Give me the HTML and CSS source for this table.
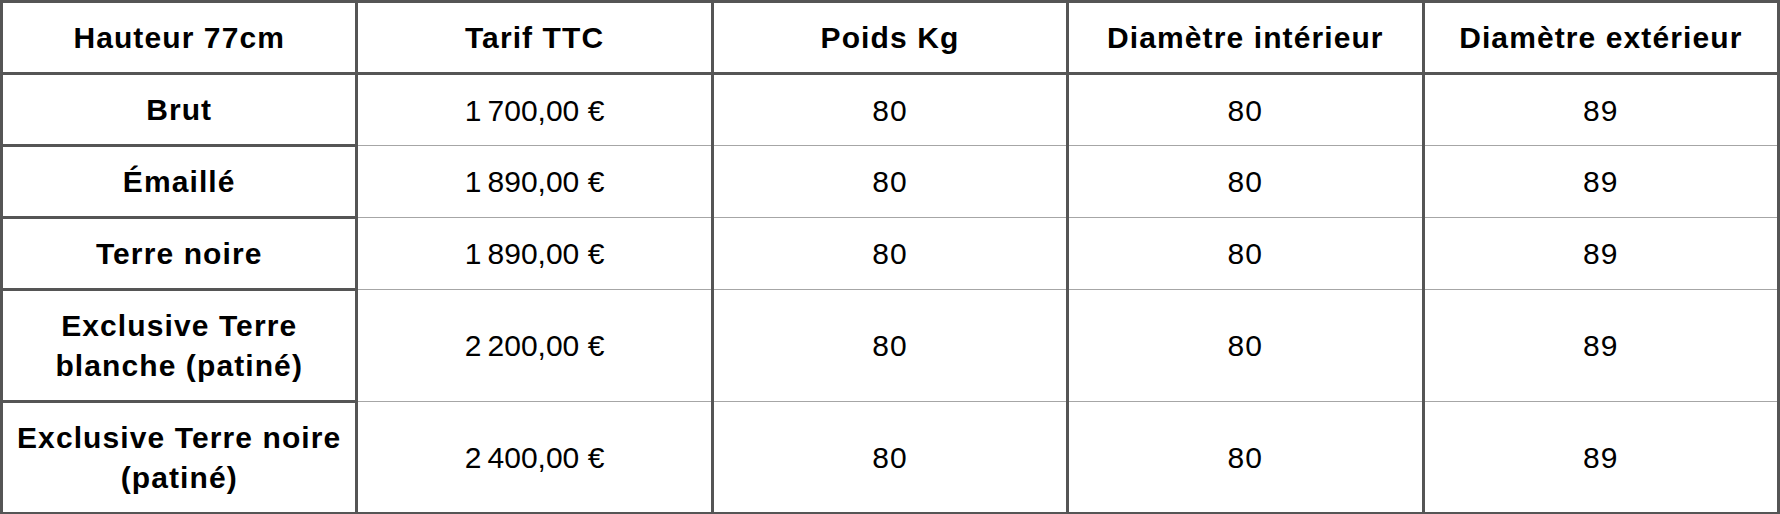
FILE: index.html
```html
<!DOCTYPE html>
<html lang="fr">
<head>
<meta charset="utf-8">
<title>Tarifs</title>
<link rel="stylesheet" href="styles.css">
</head>
<body>
<table class="price-table">
  <colgroup>
    <col class="col"><col class="col"><col class="col"><col class="col"><col class="col">
  </colgroup>
  <thead>
    <tr>
      <th class="head">Hauteur 77cm</th>
      <th class="head">Tarif TTC</th>
      <th class="head">Poids Kg</th>
      <th class="head">Diamètre intérieur</th>
      <th class="head">Diamètre extérieur</th>
    </tr>
  </thead>
  <tbody>
    <tr>
      <th class="rowhead">Brut</th>
      <td class="cell">1&#8239;700,00 €</td>
      <td class="cell">80</td>
      <td class="cell">80</td>
      <td class="cell">89</td>
    </tr>
    <tr>
      <th class="rowhead">Émaillé</th>
      <td class="cell">1&#8239;890,00 €</td>
      <td class="cell">80</td>
      <td class="cell">80</td>
      <td class="cell">89</td>
    </tr>
    <tr>
      <th class="rowhead">Terre noire</th>
      <td class="cell">1&#8239;890,00 €</td>
      <td class="cell">80</td>
      <td class="cell">80</td>
      <td class="cell">89</td>
    </tr>
    <tr>
      <th class="rowhead">Exclusive Terre blanche (patiné)</th>
      <td class="cell">2&#8239;200,00 €</td>
      <td class="cell">80</td>
      <td class="cell">80</td>
      <td class="cell">89</td>
    </tr>
    <tr>
      <th class="rowhead">Exclusive Terre noire (patiné)</th>
      <td class="cell">2&#8239;400,00 €</td>
      <td class="cell">80</td>
      <td class="cell">80</td>
      <td class="cell">89</td>
    </tr>
  </tbody>
</table>
</body>
</html>
```

FILE: styles.css
```css
html, body {
  margin: 0;
  padding: 0;
  background: #ffffff;
}

body {
  font-family: "Liberation Sans", Arial, sans-serif;
  color: #000000;
}

.price-table {
  width: 100%;
  table-layout: fixed;
  border-collapse: collapse;
  border: 3px solid #555555;
  font-size: 30px;
  letter-spacing: 1.1px;
  line-height: 40px;
}

.col {
  width: 20%;
}

.head,
.rowhead,
.cell {
  padding: 15px 10px 14px;
  text-align: center;
  vertical-align: middle;
}

.head,
.rowhead {
  font-weight: bold;
  border: 3px solid #555555;
}

.cell {
  font-weight: normal;
  border-left: 3px solid #555555;
  border-right: 3px solid #555555;
  border-top: 1px solid #a6a6a6;
  border-bottom: 1px solid #a6a6a6;
}
```
